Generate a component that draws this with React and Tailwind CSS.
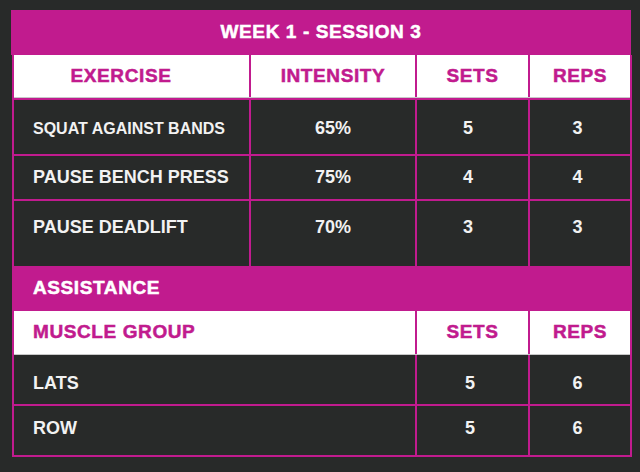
const exercises = [
  { name: 'SQUAT AGAINST BANDS', intensity: '65%', sets: 5, reps: 3, small: true, h: 'h-[56px]', pad: 'pt-[3px]' },
  { name: 'PAUSE BENCH PRESS', intensity: '75%', sets: 4, reps: 4, h: 'h-[45px]', pad: '' },
  { name: 'PAUSE DEADLIFT', intensity: '70%', sets: 3, reps: 3, h: 'h-[67px]', pad: 'pb-[12px]' },
];

const assistance = [
  { group: 'LATS', sets: 5, reps: 6, h: 'h-[49px]', pad: 'pt-[8px]' },
  { group: 'ROW', sets: 5, reps: 6, h: 'h-[51px] border-t-2 border-[#c11b8e]', pad: 'pb-[4px]' },
];

const head = 'text-[19px] font-bold tracking-[0.6px] text-[#c11b8e] [-webkit-text-stroke:0.5px]';
const cell = 'text-[18px] font-bold text-[#f2f2f2]';

function App() {
  return (
    <div className="w-[640px] h-[472px] bg-[#282a29] pt-[10px] font-['Liberation_Sans',Arial,sans-serif]">
      <div className="ml-[11px] w-[620px] h-[45px] bg-[#c11b8e] flex items-center justify-center">
        <span className="text-[19px] font-bold tracking-[0.6px] text-white [-webkit-text-stroke:0.5px]">WEEK 1 - SESSION 3</span>
      </div>

      <div className="ml-[12px] w-[620px] border-x-2 border-b-2 border-[#c11b8e]">
        {/* main lifts */}
        <div className="flex h-[43px] bg-white border-b border-[#c8c8c8]">
          <div className={`w-[235px] flex items-center justify-center pr-[21px] ${head}`}>EXERCISE</div>
          <div className={`w-[166px] border-l-2 border-[#c11b8e] flex items-center justify-center ${head}`}>INTENSITY</div>
          <div className={`w-[113px] border-l-2 border-[#c11b8e] flex items-center justify-center ${head}`}>SETS</div>
          <div className={`w-[102px] border-l-2 border-[#c11b8e] flex items-center justify-center ${head}`}>REPS</div>
        </div>
        {exercises.map((ex) => (
          <div key={ex.name} className={`flex border-t-2 border-[#c11b8e] ${ex.h}`}>
            <div className={`w-[235px] flex items-center pl-[19px] font-bold text-[#f2f2f2] ${ex.pad} ${ex.small ? 'text-[16px]' : 'text-[18px]'}`}>
              {ex.name}
            </div>
            <div className={`w-[166px] border-l-2 border-[#c11b8e] flex items-center justify-center ${ex.pad} ${cell}`}>{ex.intensity}</div>
            <div className={`w-[113px] border-l-2 border-[#c11b8e] flex items-center justify-center pr-[9px] ${ex.pad} ${cell}`}>{ex.sets}</div>
            <div className={`w-[102px] border-l-2 border-[#c11b8e] flex items-center justify-center pr-[5px] ${ex.pad} ${cell}`}>{ex.reps}</div>
          </div>
        ))}

        {/* assistance */}
        <div className="h-[45px] bg-[#c11b8e] flex items-center pl-[19px]">
          <span className="text-[19px] font-bold tracking-[0.6px] text-white [-webkit-text-stroke:0.5px]">ASSISTANCE</span>
        </div>
        <div className="flex h-[44px] bg-white border-b border-[#c8c8c8]">
          <div className={`w-[401px] flex items-center pl-[19px] ${head}`}>MUSCLE GROUP</div>
          <div className={`w-[113px] border-l-2 border-[#c11b8e] flex items-center justify-center ${head}`}>SETS</div>
          <div className={`w-[102px] border-l-2 border-[#c11b8e] flex items-center justify-center ${head}`}>REPS</div>
        </div>
        {assistance.map((a) => (
          <div key={a.group} className={`flex ${a.h}`}>
            <div className={`w-[401px] flex items-center pl-[19px] ${a.pad} ${cell}`}>{a.group}</div>
            <div className={`w-[113px] border-l-2 border-[#c11b8e] flex items-center justify-center pr-[5px] ${a.pad} ${cell}`}>{a.sets}</div>
            <div className={`w-[102px] border-l-2 border-[#c11b8e] flex items-center justify-center pr-[5px] ${a.pad} ${cell}`}>{a.reps}</div>
          </div>
        ))}
      </div>
    </div>
  );
}

export default App;
